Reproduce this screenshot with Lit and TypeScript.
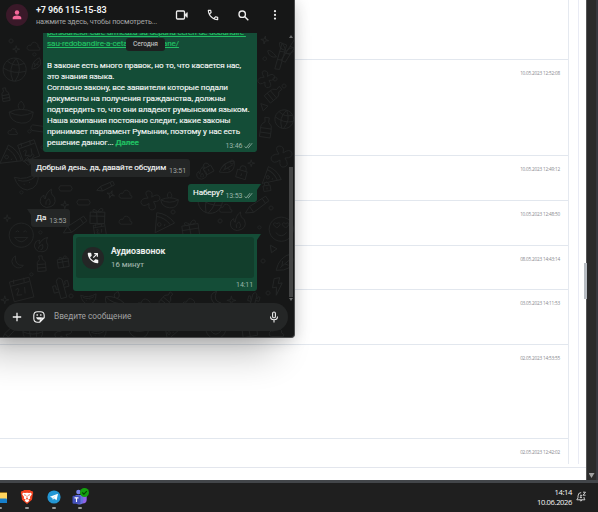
import { LitElement, css, html, svg } from 'lit'
import { customElement } from 'lit/decorators.js'
import { styleMap } from 'lit/directives/style-map.js'

const ROWS = [
  { height: 60, date: '' },
  { height: 96, date: '10.05.2023 12:52:08' },
  { height: 45, date: '10.05.2023 12:49:12' },
  { height: 44.5, date: '10.05.2023 12:48:50' },
  { height: 44, date: '08.05.2023 14:43:14' },
  { height: 55, date: '03.05.2023 14:11:53' },
  { height: 94, date: '02.05.2023 14:53:55' },
  { height: 25.5, date: '02.05.2023 12:42:02' },
]

// Line drawings for the chat wallpaper, each in a box of about 24 units
const SHAPES: Record<string, string> = {
  ball: 'M12 1a11 11 0 1 0 .1 0M1 12q11 5 22 0M12 1q-7 11 0 22M12 1q8 10 2 22M4 5q8 5 16 0',
  smile: 'M12 1a11 11 0 1 0 .1 0M7 9q2-2 3 0M14 9q2-2 3 0M6 14q6 8 12 0z',
  hearts: 'M12 1a11 11 0 1 0 .1 0M8 11l-3-3q0-3 3-1q3-2 3 1zM16 11l-3-3q0-3 3-1q3-2 3 1zM7 15q5 6 10 0',
  star: 'M6 1l1 4 4 1-4 1-1 4-1-4-4-1 4-1z',
  dot: 'M3 1a2 2 0 1 0 .1 0',
  cloud: 'M4 14q-4-1-2-5q1-2 4-1q2-6 7-3q3 2 2 5q4 1 2 4z',
  melon: 'M1 6q11 5 22-2q0 15-12 15Q3 17 1 6M4 9q8 4 16-1M9 13v1M14 12v1',
  gift: 'M2 8l18-3 2 14-18 3zM2 13l19-3M10 7l3 14M11 6q-7-4-6 0q2 3 6 0q3-7 6-4q1 4-6 4',
  fire: 'M11 22q-9-1-8-9q1-3 3-4q0 3 2 4q0-8 5-12q0 6 5 8q5 10-7 13M10 19q-2-4 2-7q4 4 1 7',
  pencil: 'M1 22l3-7L18 2l4 4L9 20zM4 15l5 5M15 5l4 4',
  moon: 'M8 1q-9 7 0 14q6 3 10-2q-11 1-10-12z',
  cactus: 'M8 23V5q3-5 6 0v18zM8 16H3V9h3v4h2M14 13h5V7h-3v3h-2',
  leaf: 'M3 22Q1 8 12 1q9 11-2 18l-7 3M6 18L13 6M9 13h4M7 16l-1-5',
  candle: 'M1 11q11-5 22 0q-1 11-11 10Q2 20 1 11q11 6 22 0M11 9q-4-4 1-8q5 5 1 8',
  calendar: 'M2 4l19-3 3 19-19 3zM3 8l18-3M6 2v4M16 1v4M7 12q4-3 3 1l-2 4h5M16 10v6',
  lock: 'M2 10l14-2 2 11-14 2zM5 9q-2-7 4-7q4 0 5 6M10 13v4',
  bottle: 'M6 1h5v5q5 3 4 9v8H3v-8q-1-6 4-9zM3 13h12M3 18h12',
  bamboo: 'M8 23L11 1l4 1-3 21zM10 8h4M9 15h4M14 9q4-7 9-5q-3 6-9 5M8 13Q2 7 0 9q2 6 8 4',
  flower: 'M9 9Q4 2 9 1q6 0 4 7q7-5 9 0q1 5-7 5q5 8-1 9q-5 1-4-7q-7 5-9-1Q1 9 9 9',
  pill: 'M3 1h14q4 4 0 7H3q-4-4 0-7z',
  pizza: 'M1 1q12-2 22 6L5 23zM2 5q9-1 17 5M7 11a2 2 0 1 0 .1 0M13 11v2',
  tri: 'M1 2l9 3-6 6z',
  zap: 'M7 1h7l-3 7h5L6 22l2-10H3z',
}

// name, x, y, scale, rotation
const DOODLES: [string, number, number, number, number][] = [
  ['star', 12, 12, .7, 0], ['cloud', 26, 6, .8, 0], ['leaf', 31, 24, .6, 10], ['ball', 2, 24, 1.05, 8],
  ['dot', 8, 5, 1, 0], ['dot', 32, 19, .8, 0], ['bottle', 0, 54, .6, -10], ['candle', 8, 67, 1.1, 0],
  ['cloud', 7, 93, .6, 0], ['dot', 27, 96, .8, 0], ['pill', 29, 92, .8, 8], ['calendar', 17, 107, .9, -10],
  ['dot', 40, 112, .8, 0], ['pizza', 0, 115, .9, 35], ['melon', 14, 136, 1.1, -8], ['bottle', 25, 121, .5, 40],
  ['dot', 19, 157, .8, 0], ['pill', 58, 152, .75, 0], ['pill', 76, 166, .75, 0], ['star', 60, 167, .8, 0],
  ['fire', 38, 155, .9, 10], ['star', 104, 158, .8, 20], ['cloud', 118, 154, .8, 0], ['pencil', 98, 145, .7, 20],
  ['star', 3, 181, .7, 0], ['gift', 88, 174, .8, 10], ['cloud', 118, 180, .8, 0], ['flower', 140, 157, .9, 0],
  ['smile', 8, 189, 1.1, 0], ['dot', 38, 197, .8, 0], ['fire', 33, 202, .8, 30], ['pencil', 64, 180, 1, 10],
  ['calendar', 92, 190, .6, 0], ['moon', 9, 222, .8, 0], ['bottle', 35, 222, .7, -5], ['gift', 56, 222, .6, 0],
  ['calendar', 8, 244, 1.05, -5], ['cactus', 50, 242, 1, -15], ['dot', 29, 239, .8, 0], ['melon', 80, 258, .7, 0],
  ['star', 0, 262, .8, 0], ['candle', 104, 257, .9, 20], ['cloud', 135, 262, 1, 0], ['bottle', 160, 259, .7, 40],
  ['star', 259, 3, .8, 10], ['bamboo', 267, 9, 1.2, 8], ['bamboo', 277, 5, 1.1, 25], ['dot', 262, 23, .9, 0],
  ['flower', 257, 37, .8, 0], ['dot', 272, 43, 1, 0], ['dot', 281, 50, 1, 0], ['bottle', 266, 53, .8, 50],
  ['ball', 274, 76, .85, 15], ['bottle', 258, 84, .9, 8], ['flower', 270, 112, 1, 0], ['tri', 260, 69, .8, 0],
  ['lock', 202, 128, .6, -20], ['dot', 229, 126, 1, 0], ['leaf', 220, 126, .8, 30], ['lock', 235, 132, .7, 25],
  ['star', 247, 126, .7, 0], ['pizza', 262, 136, .8, 30], ['lock', 262, 148, .5, 0], ['candle', 160, 158, .8, 0],
  ['fire', 195, 133, .6, 0], ['dot', 268, 172, 1, 0], ['gift', 180, 186, .9, 0], ['pizza', 153, 181, .9, 15],
  ['fire', 228, 178, .9, 5], ['ball', 197, 155, 1.1, 20], ['pencil', 246, 160, 1, 10], ['cloud', 218, 168, .8, 0],
  ['hearts', 268, 183, 1.1, 0], ['dot', 217, 185, 1, 0], ['dot', 170, 176, 1, 0], ['dot', 257, 192, .8, 0],
  ['tri', 268, 212, .8, 10], ['leaf', 276, 219, 1, 20], ['dot', 260, 225, 1, 0], ['zap', 270, 244, .8, -10],
  ['dot', 265, 257, 1, 0], ['cloud', 181, 262, .9, 0], ['moon', 207, 258, .8, 20], ['star', 226, 262, .9, 0],
  ['cactus', 246, 258, .7, 15], ['cloud', 270, 273, .8, 0],
  ['dot', 68, 260, 1, 0], ['ball', 22, 288, .9, 0], ['flower', 54, 291, .8, 0], ['melon', 88, 292, .8, 0],
  ['candle', 128, 286, .9, 0], ['pizza', 164, 291, .7, 0], ['smile', 205, 285, .9, 0], ['gift', 240, 287, .8, 0],
  ['cloud', 268, 291, .9, 0], ['pencil', 2, 290, .7, 0],
]

const checks = svg`<path d="M.5 4.400l1.600 1.500L6 1.200M3.700 5.400l.6.500L8.200 1.200"/>`

@customElement('wa-wallpaper')
export class WaWallpaper extends LitElement {
  render() {
    return html`
      <svg width="295" height="304" viewBox="0 0 295 304">
        ${DOODLES.map(([name, x, y, scale, turn]) => svg`
          <path d=${SHAPES[name]} stroke-width=${0.9 / scale}
            transform="translate(${x} ${y}) scale(${scale}) rotate(${turn} 12 12)"/>`)}
      </svg>
    `
  }

  static styles = css`
    :host {
      display: block;
    }
    svg {
      display: block;
      fill: none;
      stroke: #242626;
      stroke-linejoin: round;
    }
  `
}

@customElement('chat-window')
export class ChatWindow extends LitElement {
  render() {
    return html`
      <wa-wallpaper class="wallpaper"></wa-wallpaper>
      <header class="header">
        <span class="avatar">
          <svg width="10" height="10" viewBox="0 0 10 10" fill="#f5679a"><circle cx="5" cy="2.500" r="2.200"/><path d="M.7 9.200V7.800C.7 6.200 3.300 5.500 5 5.500s4.300.7 4.300 2.300v1.400z"/></svg>
        </span>
        <div class="who">
          <div class="phone">+7 966 115-15-83</div>
          <div class="hint">нажмите здесь, чтобы посмотреть...</div>
        </div>
        <div class="actions">
          <svg width="14" height="12" viewBox="0 0 14 12" fill="none" stroke="#eee" stroke-width="1.300"><rect x="1.500" y="2" width="8" height="8" rx="1"/><path d="M10 5.400l2.300-1.900v5L10 6.600z" fill="#eee" stroke-width=".6"/></svg>
          <svg width="14" height="14" viewBox="0 0 24 24" fill="#eee"><path d="M19.950 21q-3.120 0-6.170-1.360-3.050-1.360-5.550-3.860-2.500-2.500-3.860-5.550Q3 7.170 3 4.050 3 3.600 3.300 3.300T4.050 3H8.100q.35 0 .62.240.28.240.33.560l.65 3.500q.05.400-.02.680-.08.270-.28.470L6.970 10.900q.5.930 1.190 1.790.68.860 1.510 1.660.78.780 1.630 1.440.85.660 1.800 1.210l2.350-2.350q.23-.22.590-.34.360-.11.710-.06l3.450.7q.350.100.58.360.22.260.22.590v4.050q0 .45-.3.750t-.75.300zM6.030 9l1.650-1.650L7.250 5H5.030q.120 1.030.35 2.030.22 1 .65 1.970zm8.950 8.950q.97.430 1.980.68 1.020.25 2.040.32v-2.200l-2.350-.48z"/></svg>
          <svg width="13" height="13" viewBox="0 0 13 13" fill="none" stroke="#eee" stroke-width="1.400"><circle cx="5.200" cy="5.200" r="3.200"/><path d="M7.600 7.600l3.700 3.700"/></svg>
          <svg class="dots" width="4" height="12" viewBox="0 0 4 12" fill="#eee"><circle cx="2" cy="2.200" r="1.100"/><circle cx="2" cy="5.900" r="1.100"/><circle cx="2" cy="9.600" r="1.100"/></svg>
        </div>
      </header>
      <main class="messages">
        <div class="bubble out long">
          <div class="text">
            <div class="link w1">persoanelor-care-urmeaza-sa-depuna-cereri-de-dobandire-</div>
            <div class="link">sau-redobandire-a-cetateniei-romane/</div>
            <br>
            <div>В законе есть много правок, но то, что касается нас,</div>
            <div>это знания языка.</div>
            <div>Согласно закону, все заявители которые подали</div>
            <div>документы на получения гражданства, должны</div>
            <div>подтвердить то, что они владеют румынским языком.</div>
            <div>Наша компания постоянно следит, какие законы</div>
            <div>принимает парламент Румынии, поэтому у нас есть</div>
            <div>решение данног... <b class="more">Далее</b></div>
          </div>
          <div class="time">13:46 <svg class="checks" width="9" height="7" viewBox="0 0 9 7">${checks}</svg></div>
        </div>
        <div class="bubble in">
          <span>Добрый день. да, давайте обсудим</span>
          <span class="time">13:51</span>
        </div>
        <div class="bubble out short tail">
          <span>Наберу?</span>
          <span class="time">13:53 <svg class="checks" width="9" height="7" viewBox="0 0 9 7">${checks}</svg></span>
        </div>
        <div class="bubble in">
          <span>Да</span>
          <span class="time">13:53</span>
        </div>
        <div class="bubble out call tail">
          <div class="card">
            <span class="call-icon">
              <svg width="14" height="14" viewBox="0 0 24 24" fill="#f4f4f4"><path d="M19.950 21q-3.120 0-6.170-1.360-3.050-1.360-5.550-3.860-2.500-2.500-3.860-5.550Q3 7.170 3 4.050 3 3.600 3.300 3.300T4.050 3H8.100q.35 0 .62.240.28.240.33.560l.65 3.500q.05.400-.02.680-.08.270-.28.470L6.970 10.900q.5.930 1.190 1.790.68.860 1.510 1.660.78.780 1.630 1.440.85.660 1.800 1.210l2.350-2.350q.23-.22.590-.34.360-.11.710-.06l3.450.7q.350.100.58.360.22.260.22.590v4.050q0 .45-.3.750t-.75.300z"/><path d="M12.500 11.500l6-6M14 4.500h5.500V10" fill="none" stroke="#f4f4f4" stroke-width="2"/></svg>
            </span>
            <div>
              <div class="call-title">Аудиозвонок</div>
              <div class="call-length">16 минут</div>
            </div>
          </div>
          <div class="time">14:11</div>
        </div>
      </main>
      <footer class="composer">
        <svg width="10" height="10" viewBox="0 0 10 10" stroke="#f2f2f2" stroke-width="1.300"><path d="M5 .8v8.400M.8 5h8.400"/></svg>
        <svg class="sticker" width="12" height="12" viewBox="0 0 12 12" fill="none" stroke="#f2f2f2" stroke-width="1.100"><path d="M11.200 6.700V4.500Q11.200.8 7.500.8h-3Q.8.800.8 4.500v3q0 3.700 3.700 3.700h2.300zM11.200 6.700Q7.600 6.700 6.800 11.200"/><path d="M3 6.200h6Q8.300 8.800 6 8.800T3 6.200z" fill="#f2f2f2" stroke="none"/><path d="M4.200 3.300v1.500M7.800 3.300v1.500" stroke-width="1.300"/></svg>
        <span class="placeholder">Введите сообщение</span>
        <svg width="10" height="12" viewBox="0 0 10 12" fill="none" stroke="#eee" stroke-width="1.100"><rect x="3.600" y="1" width="2.800" height="5.800" rx="1.400"/><path d="M1.500 5.400q0 3.300 3.500 3.300t3.500-3.300M5 8.700v2.700"/></svg>
      </footer>
      <span class="today">Сегодня</span>
      <div class="scroll">
        <span class="arrow up"></span>
        <span class="thumb"></span>
        <span class="arrow down"></span>
      </div>
    `
  }

  static styles = css`
    :host {
      display: flex;
      flex-direction: column;
      width: 294px;
      height: 337px;
      overflow: hidden;
      background: #161717;
      border-right: 1px solid #4b4c4d;
      border-bottom: 1px solid #4b4c4d;
      border-radius: 0 0 4px 0;
      box-shadow: -20px 16px 36px rgba(0, 0, 0, .24), 0 2px 16px rgba(0, 0, 0, .2);
      color: #f3f5f4;
      font: 8.1px/11px Roboto, "Noto Sans", sans-serif;
      letter-spacing: -.1px;
      white-space: nowrap;
    }
    svg {
      flex: none;
    }
    .wallpaper {
      position: absolute;
      left: 0;
      top: 33px;
    }
    .header {
      position: relative;
      display: flex;
      flex: none;
      box-sizing: border-box;
      height: 33px;
      padding: 4px 17px 7px 6px;
      background: #161717;
    }
    .avatar {
      display: flex;
      align-items: center;
      justify-content: center;
      width: 22px;
      height: 22px;
      border-radius: 50%;
      background: #3a1929;
    }
    .who {
      width: 139px;
      margin-left: 8px;
    }
    .phone {
      font-size: 9px;
      font-weight: 600;
      line-height: 12px;
      letter-spacing: -.13px;
    }
    .hint {
      color: #a5a6a6;
      font-size: 7.4px;
      line-height: 11px;
      letter-spacing: -.15px;
    }
    .actions {
      display: flex;
      flex: 1;
      align-items: center;
      gap: 17px;
    }
    .dots {
      margin-left: auto;
    }
    .messages {
      position: relative;
      display: flex;
      flex: 1;
      flex-direction: column;
      align-items: flex-start;
      justify-content: flex-end;
      min-height: 0;
      padding: 0 37px 12px 31px;
      overflow: hidden;
      -webkit-text-stroke: .15px;
    }
    .bubble {
      position: relative;
      box-sizing: border-box;
      flex: none;
      border-radius: 3px;
    }
    .out {
      align-self: flex-end;
      background: #144d37;
    }
    .in {
      display: flex;
      height: 18px;
      margin: 7px 0;
      padding: 3px 4px 0 5px;
      gap: 3px;
      border-top-left-radius: 0;
      background: #242626;
    }
    .in::before,
    .tail::after {
      position: absolute;
      top: 0;
      width: 4px;
      height: 6px;
      content: "";
    }
    .in::before {
      right: 100%;
      background: #242626;
      clip-path: polygon(0 0, 100% 0, 100% 100%);
    }
    .tail {
      border-top-right-radius: 0;
    }
    .tail::after {
      left: 100%;
      background: #144d37;
      clip-path: polygon(0 0, 100% 0, 0 100%);
    }
    .long {
      width: 214px;
      height: 125px;
      padding: 0 4px;
    }
    .link {
      width: fit-content;
      color: #21c063;
      text-decoration: underline;
    }
    .w1 {
      letter-spacing: -.17px;
    }
    .more {
      color: #21c063;
    }
    .time {
      color: #a0a5a3;
      font-size: 7px;
      line-height: 9px;
      -webkit-text-stroke: 0;
    }
    .out .time {
      color: #9bb5aa;
    }
    .in .time {
      padding-top: 5px;
    }
    .long .time {
      margin-top: -6px;
      text-align: right;
    }
    .checks {
      fill: none;
      stroke: #9bb5aa;
      stroke-width: .8;
      vertical-align: -1px;
    }
    .short {
      display: flex;
      justify-content: space-between;
      width: 69px;
      height: 18px;
      padding: 3px 4px 0 5px;
    }
    .short .time {
      padding-top: 5px;
    }
    .call {
      width: 184px;
      height: 57px;
      padding: 3px;
    }
    .card {
      display: flex;
      align-items: center;
      height: 41px;
      padding-left: 6px;
      gap: 7px;
      border-radius: 3px;
      background: #123e2c;
    }
    .call-icon {
      display: flex;
      align-items: center;
      justify-content: center;
      width: 22px;
      height: 22px;
      border-radius: 50%;
      background: #242626;
    }
    .call-title {
      padding-bottom: 2px;
      font-size: 8.6px;
      font-weight: 500;
      letter-spacing: .1px;
    }
    .call-length {
      color: #9bb0a6;
      font-size: 7.8px;
      letter-spacing: 0;
    }
    .call .time {
      padding: 3px 1px 0 0;
      text-align: right;
    }
    .composer {
      position: relative;
      display: flex;
      flex: none;
      align-items: center;
      box-sizing: border-box;
      height: 28px;
      margin: 0 6px 6px 4px;
      padding: 0 9px 1px 8px;
      border-radius: 14px;
      background: #242626;
    }
    .sticker {
      margin: 0 9px 0 11px;
    }
    .placeholder {
      flex: 1;
      color: #a0a1a1;
      font-size: 8.3px;
      letter-spacing: -.03px;
    }
    .today {
      position: absolute;
      left: 126px;
      top: 38px;
      width: 39px;
      height: 13px;
      border-radius: 3px;
      background: #1d1f1f;
      color: #b5b7b7;
      font-size: 6.6px;
      font-weight: 500;
      line-height: 13px;
      text-align: center;
    }
    .scroll {
      position: absolute;
      left: 289px;
      top: 35px;
      display: flex;
      flex-direction: column;
      justify-content: space-between;
      width: 4px;
      height: 266px;
    }
    .thumb {
      height: 130px;
      margin-top: 127px;
      background: #434444;
    }
    .arrow {
      height: 3px;
      background: #6b6c6c;
    }
    .up {
      clip-path: polygon(50% 0, 100% 100%, 0 100%);
    }
    .down {
      clip-path: polygon(0 0, 100% 0, 50% 100%);
    }
  `
}

@customElement('task-bar')
export class TaskBar extends LitElement {
  render() {
    return html`
      <div class="apps">
        <span class="app explorer">
          <svg width="16" height="16" viewBox="0 0 16 16"><path d="M0 2h5l1.500 1.500h8.500v5H0z" fill="#f5b51b"/><path d="M0 4h15v9.500H0z" fill="#ffd45e"/><path d="M3.500 14v-3.500q0-1 1-1H14q1 0 1 1V14z" fill="#167fcb"/></svg>
        </span>
        <span class="app">
          <svg width="14" height="16" viewBox="0 0 14 16"><path d="M4 1h6l1 1.100 1.400-.1.900 2-.5 1.300L12 10.800 7 15l-5-4.200L1.200 5.300.7 4l.9-2L3 2.100z" fill="#f4431f"/><path d="M3 3.800l2 .3L7 3.700l2 .4 2-.3.800 1.500-1.900 2.600.4 1.500-2 1.200 1 1.200L7 13.400l-2.300-1.600 1-1.200-2-1.200.4-1.500-1.900-2.600z" fill="#fff"/><path d="M4 5.700l2 .7M10 5.700l-2 .7M7 6.500v2.700l-1 .7h2l-1-.7" stroke="#f4431f" stroke-width=".7" fill="none"/></svg>
        </span>
        <span class="app">
          <svg width="14" height="16" viewBox="0 0 14 16"><circle cx="7" cy="8" r="6.600" fill="#2497d4"/><path d="M2.900 7.800L11 4.700 9.600 11.300 7.100 9.500 5.900 10.700 5.500 8.900z" fill="#fff"/><path d="M5.500 8.900l4-2.900-3 3.200-.6 1.500z" fill="#b8dcef"/></svg>
        </span>
        <span class="app">
          <svg width="18" height="18" viewBox="0 0 18 18"><circle cx="7.500" cy="4" r="2.300" fill="#7b83eb"/><path d="M5 7h9.500q1.200 0 1.200 1.200v3q0 4.300-4 4.300H8z" fill="#8f63e8"/><path d="M4.500 7h7.800v5q0 4.500-4 4.500t-3.800-4z" fill="#6670dd"/><rect x="1.500" y="7.700" width="8" height="8" rx="1" fill="#4451bb"/><path d="M3.500 9.900h4M5.500 10v4" stroke="#fff" stroke-width="1.100"/><circle cx="13.500" cy="4.500" r="4.500" fill="#13a10e"/><path d="M11.300 4.500l1.600 1.600 2.900-3" stroke="#073f06" stroke-width="1.100" fill="none"/></svg>
        </span>
      </div>
      <div class="clock">
        <div>14:14</div>
        <div>10.06.2026</div>
      </div>
      <svg class="bell" width="12" height="12" viewBox="0 0 12 12" fill="none" stroke="#ddd" stroke-width=".9"><path d="M6.200 1.500Q3 1.700 3 5v1.900L1.800 8.800h8.100L9 7V6M4.700 9q1.200 2.200 2.500 0M5 4.300h1.900L5 6.600h2M8 1.200h2.500L8 4.200h2.600"/></svg>
    `
  }

  static styles = css`
    :host {
      display: flex;
      align-items: center;
      box-sizing: border-box;
      padding: 0 11px 1px 0;
      background: #1f1f1f;
      color: #f5f5f5;
      font: 7.6px/10px "Open Sans", "Noto Sans", sans-serif;
    }
    .apps {
      display: flex;
      flex: 1;
      align-self: stretch;
      margin-left: -13px;
    }
    .app {
      display: flex;
      flex-direction: column;
      align-items: center;
      justify-content: flex-end;
      width: 26.7px;
      padding-bottom: 2px;
    }
    .app svg {
      height: 18px;
      margin-bottom: 1px;
    }
    .app::after {
      width: 4px;
      height: 2px;
      border-radius: 1px;
      background: #999;
      content: "";
    }
    .clock {
      padding-bottom: 1px;
      letter-spacing: -.38px;
      text-align: right;
    }
    .bell {
      margin-left: 3px;
    }
  `
}

@customElement('app-root')
export class AppRoot extends LitElement {
  render() {
    return html`
      <div class="browser">
        <div class="page">
          <div class="columns">
            <div class="rows">
              ${ROWS.map((row) => html`
                <div class="row" style=${styleMap({ height: `${row.height}px` })}>${row.date}</div>
              `)}
            </div>
            <div class="gutter"></div>
          </div>
        </div>
        <div class="track"><span class="down"></span></div>
        <div class="edge"></div>
      </div>
      <div class="frame"></div>
      <task-bar class="bar"></task-bar>
      <span class="grip"></span>
      <chat-window class="chat"></chat-window>
    `
  }

  static styles = css`
    :host {
      position: relative;
      display: flex;
      flex-direction: column;
      width: 598px;
      height: 512px;
      overflow: hidden;
    }
    .browser {
      display: flex;
      height: 480px;
    }
    .page {
      flex: 1;
      background: #fff;
    }
    .columns {
      display: flex;
      box-sizing: border-box;
      height: 468px;
      padding-bottom: 3px;
      border-bottom: 1px solid #e3e6ed;
    }
    .rows {
      width: 568px;
      border-right: 1px solid #e5e9f0;
    }
    .row {
      box-sizing: border-box;
      padding: 9px 8px 0 0;
      border-bottom: 1px solid #e2e7ee;
      color: #88888e;
      font: 4.7px/8px "Open Sans", "Noto Sans", sans-serif;
      letter-spacing: -.2px;
      text-align: right;
    }
    .row:last-child {
      border-bottom: 0;
    }
    .gutter {
      width: 9px;
      border-right: 1px solid #e9ebf4;
    }
    .track {
      display: flex;
      align-items: flex-end;
      justify-content: center;
      width: 9px;
      background: #2b2b2b;
      border-left: 1px solid #555;
    }
    .down {
      width: 6px;
      height: 5px;
      margin-bottom: 2px;
      background: #a0a0a0;
      clip-path: polygon(0 0, 100% 0, 50% 100%);
    }
    .edge {
      width: 2px;
      background: #37373e;
    }
    .frame {
      height: 3px;
      background: #43464a;
    }
    .bar {
      flex: 1;
    }
    .grip {
      position: absolute;
      left: 584px;
      top: 263px;
      width: 3px;
      height: 36px;
      background: #b7bcc2;
    }
    .chat {
      position: absolute;
      left: 0;
      top: 0;
    }
  `
}
